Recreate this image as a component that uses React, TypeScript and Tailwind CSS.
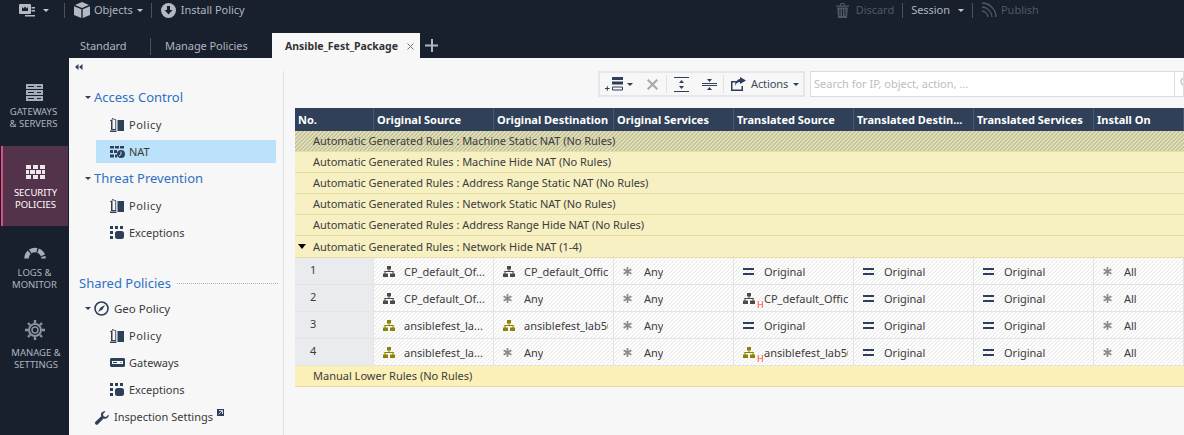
import React from "react";

const F = "[font-family:'Noto_Sans','Open_Sans',sans-serif]";

const Caret = ({ c = "border-t-[#c3c9d1]" }: { c?: string }) => (
  <span className={`inline-block w-0 h-0 border-l-[3px] border-r-[3px] border-t-[3px] border-l-transparent border-r-transparent ${c}`} />
);

const Net = ({ color = "#4a4a4a" }: { color?: string }) => (
  <svg width="12" height="11" viewBox="0 0 12 11" fill={color}>
    <rect x="4" y="0" width="4" height="3.5" />
    <rect x="5.5" y="3" width="1" height="2.5" />
    <rect x="1.5" y="5" width="9" height="1" />
    <rect x="1.5" y="5" width="1" height="3" />
    <rect x="9.5" y="5" width="1" height="3" />
    <rect x="0" y="7.5" width="5" height="3.5" />
    <rect x="7" y="7.5" width="5" height="3.5" />
  </svg>
);

const Star = () => (
  <svg width="9" height="9" viewBox="0 0 9 9" stroke="#8a8a8a" strokeWidth="1.7">
    <path d="M4.5 0v9M.6 2.2l7.8 4.6M.6 6.8l7.8-4.6" />
  </svg>
);

const Eq = () => (
  <svg width="11" height="7" viewBox="0 0 11 7" fill="#2e3f58">
    <rect width="11" height="2" />
    <rect y="5" width="11" height="2" />
  </svg>
);

const BookIcon = () => (
  <svg width="14" height="14" viewBox="0 0 14 14" fill="#2e3f58">
    <path d="M0 3l1-.3V12h5.2V1.5L2 0v1.5L0 2.2zM2.5 1l2.8 1v9H2.5z" />
    <path d="M7.5 2H14v11H7.5zM0 12.5h6.5V14H0z" />
  </svg>
);

const ExcIcon = () => (
  <svg width="14" height="13" viewBox="0 0 14 13" fill="#2e3f58">
    <rect x="0" y="0" width="3" height="3" />
    <rect x="5" y="0" width="3" height="3" />
    <rect x="10" y="0" width="3" height="3" />
    <rect x="0" y="5" width="3" height="3" />
    <rect x="0" y="10" width="3" height="3" />
    <rect x="5" y="5" width="9" height="8" rx="2.5" />
  </svg>
);

const NatIcon = () => (
  <svg width="15" height="12" viewBox="0 0 15 12" fill="#2e3f58">
    <rect x="0" y="0" width="4" height="2.5" />
    <rect x="5" y="0" width="4" height="2.5" />
    <rect x="10" y="0" width="4" height="2.5" />
    <rect x="0" y="4" width="3" height="3" />
    <rect x="4" y="4" width="3" height="3" />
    <rect x="0" y="8.5" width="4" height="3" />
    <rect x="5" y="8.5" width="2" height="3" />
    <circle cx="11" cy="8" r="4" />
    <path d="M11 5.5v3l-2 1.5" stroke="#bbe1fb" fill="none" />
  </svg>
);

const Sub = ({ icon, label }: { icon: React.ReactNode; label: string }) => (
  <div className="flex items-center h-[27px] pl-[41px]">
    <span className="w-[19px] flex items-center">{icon}</span>
    <span className={`text-[11px] pt-px text-[#3a3a3a] ${label === "Policy" ? "tracking-[0.5px]" : ""}`}>{label}</span>
  </div>
);

const Side = ({ icon, lines, active, h, pt, mt = "mt-[5px]", tx = "" }: { icon: React.ReactNode; lines: string[]; active?: boolean; h: string; pt: string; mt?: string; tx?: string }) => (
  <div className={`${h} ${pt} flex flex-col items-center ${active ? "bg-[#53334a] border-l-2 border-[#d8507f] ml-px mr-px text-white" : "text-[#aeb6c1]"}`}>
    {icon}
    <div className={`text-[9.5px] leading-[12px] ${mt} text-center whitespace-nowrap ${tx}`}>
      {lines.map((l) => (
        <div key={l}>{l}</div>
      ))}
    </div>
  </div>
);

const COLS = ["w-[79px]", "w-[120px]", "w-[120px]", "w-[120px]", "w-[120px]", "w-[120px]", "w-[120px]", "flex-1"];
const HEAD = ["No.", "Original Source", "Original Destination", "Original Services", "Translated Source", "Translated Destin...", "Translated Services", "Install On"];

const hatch = "bg-[repeating-linear-gradient(135deg,#faf2b8_0px,#faf2b8_1.414px,#f2edcb_1.414px,#f2edcb_2.828px)]";
const hatchDark = "bg-[repeating-linear-gradient(135deg,#bcc3b6_0px,#bcc3b6_1.414px,#e8e09c_1.414px,#e8e09c_2.828px)]";
const hatchCell = "bg-[repeating-linear-gradient(135deg,#ffffff_0px,#ffffff_1.414px,#f0f0f0_1.414px,#f0f0f0_2.828px)]";

const Section = ({ label, dark, open, h = "h-[21px]" }: { label: string; dark?: boolean; open?: boolean; h?: string }) => (
  <div className={`flex items-center ${h} border-b border-[#e6dea0] text-[11px] tracking-[-0.03px] text-[#3c3c3c] ${dark ? hatchDark : hatch}`}>
    <span className="w-[18px] pl-[3px] flex items-center">
      {open && <span className="inline-block w-0 h-0 border-l-4 border-r-4 border-t-[5px] border-l-transparent border-r-transparent border-t-black" />}
    </span>
    <span className="whitespace-nowrap pt-px">{label}</span>
  </div>
);

const Cell = ({ icon, text, i, badge }: { icon: React.ReactNode; text: string; i: number; badge?: boolean }) => (
  <div className={`${COLS[i]} shrink-0 ${hatchCell} border-r border-[#e4e4e4] flex items-center h-full relative overflow-hidden pr-[5px]`}>
    <span className="w-[30px] pl-[9px] shrink-0 flex items-center">{icon}</span>
    {badge && <span className="absolute left-[23px] top-[15px] text-[9px] leading-none text-[#ff3b3b]">H</span>}
    <span className="text-[11px] pt-[2px] text-[#3c3c3c] whitespace-nowrap overflow-hidden">{text}</span>
  </div>
);

type C = { k: "net" | "yel" | "star" | "eq"; t: string; b?: boolean };
const n: C = { k: "net", t: "" };
const rows: C[][] = [
  [{ ...n, t: "CP_default_Of..." }, { ...n, t: "CP_default_Office" }, { k: "star", t: "Any" }, { k: "eq", t: "Original" }, { k: "eq", t: "Original" }, { k: "eq", t: "Original" }, { k: "star", t: "All" }],
  [{ ...n, t: "CP_default_Of..." }, { k: "star", t: "Any" }, { k: "star", t: "Any" }, { ...n, t: "CP_default_Office", b: true }, { k: "eq", t: "Original" }, { k: "eq", t: "Original" }, { k: "star", t: "All" }],
  [{ k: "yel", t: "ansiblefest_la..." }, { k: "yel", t: "ansiblefest_lab50" }, { k: "star", t: "Any" }, { k: "eq", t: "Original" }, { k: "eq", t: "Original" }, { k: "eq", t: "Original" }, { k: "star", t: "All" }],
  [{ k: "yel", t: "ansiblefest_la..." }, { k: "star", t: "Any" }, { k: "star", t: "Any" }, { k: "yel", t: "ansiblefest_lab50", b: true }, { k: "eq", t: "Original" }, { k: "eq", t: "Original" }, { k: "star", t: "All" }],
];
const ic = (k: C["k"]) =>
  k === "net" ? <Net /> : k === "yel" ? <Net color="#8a8400" /> : k === "star" ? <Star /> : <Eq />;

export default function App() {
  return (
    <div className={`w-[1184px] h-[435px] overflow-hidden bg-[#18202d] flex flex-col ${F}`}>
      {/* top */}
      <div className="h-[20px] flex items-center text-[11px] tracking-[-0.03px] text-[#aeb6c1] shrink-0">
        <div className="w-[65px] pl-[19px] flex items-center gap-[8px] h-[15px] border-r border-[#4a525e]">
          <svg width="16" height="13" viewBox="0 0 16 13" fill="#b4bac3">
            <rect x="0" y="0" width="12" height="10" rx="1" />
            <path d="M3 3l1.5 1.5L6 2.5l1.5 2L9 3v4H3z" fill="#18202d" />
            <rect x="12.5" y="3" width="3.5" height="1.5" />
            <rect x="12.5" y="6" width="3.5" height="1.5" />
            <rect x="6" y="11" width="10" height="1.5" />
          </svg>
          <Caret />
        </div>
        <div className="pl-[9px] pr-[8px] flex items-center h-[15px] border-r border-[#4a525e]">
          <svg width="16" height="16" viewBox="0 0 16 16" fill="#b4bac3" className="mr-[4px]">
            <path d="M8 0l7 3-7 3-7-3zM0 4.3l7.3 3V16L0 13zM16 4.3l-7.3 3V16L16 13z" />
          </svg>
          <span>Objects</span>
          <span className="ml-[4px] flex"><Caret /></span>
        </div>
        <div className="pl-[9px] flex items-center">
          <svg width="15" height="15" viewBox="0 0 15 15" className="mr-[5px]">
            <circle cx="7.5" cy="7.5" r="7.5" fill="#b4bac3" />
            <path d="M6 3h3v4h2.5l-4 4.5-4-4.5H6z" fill="#18202d" />
          </svg>
          <span>Install Policy</span>
        </div>
        <div className="ml-[591px] flex items-center h-[15px]">
          <svg width="13" height="15" viewBox="0 0 13 15" fill="#4f5866" className="mr-[7px]">
            <path d="M0 2.5h13v1.3H0zM4 2.5V1l1-1h3l1 1v1.5H8V1H5v1.5zM1.2 4.500h10.600L11 15H2zM3.500 6v7h1V6zM6 6v7h1V6zM8.500 6v7h1V6z" fillRule="evenodd" />
          </svg>
          <span className="text-[#4f5866]">Discard</span>
          <span className="w-px h-[15px] bg-[#4a525e] ml-[8px] mr-[8px]" />
          <span>Session</span>
          <span className="ml-[8px] flex"><Caret /></span>
          <span className="w-px h-[15px] bg-[#4a525e] ml-[8px] mr-[8px]" />
          <svg width="16" height="16" viewBox="0 0 16 16" fill="none" stroke="#4f5866" strokeWidth="1.3" className="mr-[4px]">
            <path d="M1 1c7 0 14 6 14 14M1 5c5 0 10 5 10 10M1 9c3 0 6 3 6 6" />
          </svg>
          <span className="text-[#4f5866]">Publish</span>
        </div>
      </div>
      <div className="h-[38px] pt-[13px] flex text-[11px] tracking-[-0.06px] text-[#aeb6c1] shrink-0">
        <div className="w-[151px] pl-[80px] border-r border-[#4a525e] h-[17px] mt-[5px] flex items-center">Standard</div>
        <div className="w-[121px] pl-[14px] h-[17px] mt-[5px] flex items-center">Manage Policies</div>
        <div className="w-[148px] bg-[#f7f7f7] flex items-center pl-[13px] pt-[2px] text-[#333] font-bold text-[10.5px] tracking-normal whitespace-nowrap">
          Ansible_Fest_Package
          <svg width="7" height="7" viewBox="0 0 7 7" stroke="#777" className="ml-[9px]"><path d="M.5.5l6 6M6.5.5l-6 6" /></svg>
        </div>
        <svg width="14" height="14" viewBox="0 0 14 14" fill="#aeb6c1" className="ml-[5px] mt-[6px]">
          <rect x="6" y="0" width="2" height="13" />
          <rect x="0" y="5.500" width="13" height="2" />
        </svg>
      </div>

      <div className="flex-1 flex min-h-0">
        {/* sidebar */}
        <div className="w-[69px] shrink-0 flex flex-col">
          <Side
            h="h-[88px]"
            pt="pt-[26px]"
            tx="pr-[2px]"
            lines={["GATEWAYS", "& SERVERS"]}
            icon={
              <svg width="17" height="17" viewBox="0 0 17 17" fill="#a5adb8">
                <path d="M0 0h17v5H0zM0 6h17v5H0zM0 12h17v5H0z" />
                <path d="M2 2h6v1H2zM11 2h4v1h-4zM2 8h6v1H2zM11 8h4v1h-4zM2 14h6v1H2zM11 14h4v1h-4z" fill="#18202d" />
              </svg>
            }
          />
          <Side
            active
            h="h-[80px]"
            pt="pt-[19px]"
            mt="mt-[8px]"
            lines={["SECURITY", "POLICIES"]}
            icon={
              <svg width="19" height="14" viewBox="0 0 19 14" fill="#ece7ec">
                <path d="M0 0h5v4H0zM7 0h5v4H7zM14 0h5v4h-5zM0 5h3v4H0zM4 5h5v4H4zM10 5h5v4h-5zM16 5h3v4h-3zM0 10h5v4H0zM7 10h5v4H7zM14 10h5v4h-5z" />
              </svg>
            }
          />
          <Side
            h="h-[80px]"
            pt="pt-[20px]"
            mt="mt-[8px]"
            lines={["LOGS &", "MONITOR"]}
            icon={
              <svg width="22" height="13" viewBox="0 0 22 13" fill="none" stroke="#a5adb8" strokeWidth="4.5">
                <path d="M2.5 12.5A8.5 8.5 0 0 1 19.5 12.5" strokeDasharray="7 1.2" />
              </svg>
            }
          />
          <Side
            h="h-[100px]"
            pt="pt-[14px]"
            mt="mt-[7px]"
            tx="pl-[3px]"
            lines={["MANAGE &", "SETTINGS"]}
            icon={
              <svg width="20" height="20" viewBox="0 0 20 20" fill="none" stroke="#8c94a0">
                <circle cx="10" cy="10" r="6" strokeWidth="2" />
                <circle cx="10" cy="10" r="3" strokeWidth="1.5" />
                <path d="M10 0v3M10 17v3M0 10h3M17 10h3M3 3l2 2M15 15l2 2M17 3l-2 2M5 15l-2 2" strokeWidth="2.4" />
              </svg>
            }
          />
        </div>

        {/* tree */}
        <div className="w-[215px] shrink-0 bg-[#f7f7f7] relative">
          <div className="absolute right-0 top-[13px] bottom-0 w-px bg-[#e2e2e2]" />
          <div className="h-[26px] pl-[6px] pt-[6px] flex">
            <svg width="8" height="6" viewBox="0 0 8 6" fill="#2e3f58"><path d="M3.5 0v6L0 3zM7.500 0v6L4 3z" /></svg>
          </div>
          <div className="h-[27px] flex items-center pl-[16px] text-[13px] text-[#2e70c4]">
            <span className="mr-[3px] flex"><Caret c="border-t-[#2e3f58]" /></span>Access Control
          </div>
          <Sub icon={<BookIcon />} label="Policy" />
          <div className="flex items-center bg-[#bbe1fb] ml-[27px] pl-[14px] mr-[8px] h-[23px] mt-[2px] mb-[2px]">
            <span className="w-[19px] flex items-center"><NatIcon /></span>
            <span className="text-[11px] pt-px text-[#3a3a3a]">NAT</span>
          </div>
          <div className="h-[27px] flex items-center pl-[16px] text-[13px] text-[#2e70c4]">
            <span className="mr-[3px] flex"><Caret c="border-t-[#2e3f58]" /></span>Threat Prevention
          </div>
          <Sub icon={<BookIcon />} label="Policy" />
          <Sub icon={<ExcIcon />} label="Exceptions" />
          <div className="h-[23px] mt-[26px] flex items-center pl-[10px] pr-[6px] text-[13px] text-[#2e70c4]">
            <span>Shared Policies</span>
            <span className="flex-1 ml-[6px] border-b border-dotted border-[#b5b5b5]" />
          </div>
          <div className="h-[27px] flex items-center pl-[16px] text-[11.5px] text-[#3a3a3a]">
            <span className="mr-[3px] flex"><Caret c="border-t-[#2e3f58]" /></span>
            <svg width="15" height="15" viewBox="0 0 15 15" className="mr-[5px]">
              <circle cx="7.5" cy="7.5" r="6.5" fill="none" stroke="#2e3f58" strokeWidth="1.6" />
              <path d="M11 4L8.500 8.500 4 11l2.500-4.500z" fill="#2e3f58" />
            </svg>
            Geo Policy
          </div>
          <Sub icon={<BookIcon />} label="Policy" />
          <Sub
            icon={
              <svg width="15" height="9" viewBox="0 0 15 9" fill="#2e3f58">
                <path d="M1 0h13l1 1v7l-1 1H1L0 8V1zM2 3v3h11V3z" fillRule="evenodd" />
                <path d="M3 4h4v1H3zM10 4l1 1 1-1v1h-2z" />
              </svg>
            }
            label="Gateways"
          />
          <Sub icon={<ExcIcon />} label="Exceptions" />
          <div className="h-[29px] flex items-center pl-[26px] text-[11px] text-[#3a3a3a]">
            <svg width="14" height="14" viewBox="0 0 14 14" fill="#2e3f58" className="mr-[5px]">
              <path d="M13.500 3.500L11 6 8.500 5.200 8 3l2.500-2.500C8.500 0 6.500 1 6 3c-.2.8 0 1.600.2 2.200L.5 10.800c-.7.7-.7 1.700 0 2.400s1.700.7 2.400 0L8.600 7.600c1.500.5 3 .2 4.200-1 .8-.8 1-2 .7-3.100z" />
            </svg>
            Inspection Settings
            <svg width="7" height="7" viewBox="0 0 7 7" className="ml-[4px] -mt-[10px]">
              <rect width="7" height="7" fill="#2e3f58" />
              <path d="M2 1.500h3.500V5M5 2L1.500 5.500" stroke="#fff" strokeWidth="0.8" fill="none" />
            </svg>
          </div>
        </div>

        {/* main */}
        <div className="flex-1 bg-[#f7f7f7] min-w-0 pl-[11px]">
          <div className="h-[50px] pt-[13px] flex">
            <div className="ml-[303px] w-[207px] h-[26px] border-2 border-[#e4e6e9] flex items-center">
              <span className="ml-[5px] flex items-end">
                <svg width="19" height="16" viewBox="0 0 19 16" fill="#2e3f58">
                  <path d="M7 1h11v3H7zM7 5.500h11v3H7z" />
                  <path d="M7.500 11h10v3h-10z" fill="none" stroke="#2e3f58" />
                  <path d="M0 12h4.500v1H0zM1.800 10.200h1v4.600h-1z" />
                </svg>
              </span>
              <span className="ml-[3px] flex"><Caret c="border-t-[#2e3f58]" /></span>
              <svg width="11" height="11" viewBox="0 0 11 11" stroke="#a8a8a8" strokeWidth="2" className="ml-[14px]"><path d="M.7.7l9.600 9.600M10.300.7L.7 10.300" /></svg>
              <span className="w-px h-[18px] bg-[#e0e2e5] ml-[8px]" />
              <svg width="15" height="15" viewBox="0 0 15 15" fill="#2e3f58" className="ml-[7px]">
                <path d="M0 0h15v1H0zM0 14h15v1H0zM7.500 3l2.500 3H5zM7.500 12L5 9h5z" />
              </svg>
              <svg width="15" height="15" viewBox="0 0 15 15" fill="#2e3f58" className="ml-[13px]">
                <path d="M0 6h15v1H0zM0 8h15v1H0zM7.500 5L5 2h5zM7.500 10l2.500 3H5z" />
              </svg>
              <span className="w-px h-[18px] bg-[#e0e2e5] ml-[6px]" />
              <svg width="15" height="14" viewBox="0 0 15 14" fill="#2e3f58" className="ml-[7px]">
                <path d="M0 4h6v1.500H1.500v7h9V9H12v5H0z" />
                <path d="M9 0l6 3.500L9 7V5C7 5 5 6 4 9c0-4 2-6.500 5-7z" />
              </svg>
              <span className="ml-[5px] text-[11px] tracking-[-0.1px] text-[#3c4a5e]">Actions</span>
              <span className="ml-[5px] flex"><Caret c="border-t-[#2e3f58]" /></span>
            </div>
            <div className="ml-[5px] flex-1 h-[26px] bg-white border border-[#dcdcdc] flex items-center pl-[3px] text-[11px] text-[#bdbdbd]">
              <span className="flex-1 pt-px">Search for IP, object, action, ...</span>
              <span className="w-[9px] h-full border-l border-[#dcdcdc] overflow-hidden flex items-center pl-[5px] pb-[5px] shrink-0">
                <svg width="9" height="9" viewBox="0 0 9 9" fill="none" stroke="#c4c4c4" strokeWidth="1.4" className="shrink-0"><circle cx="4.500" cy="4.500" r="3.500" /></svg>
              </span>
            </div>
          </div>

          {/* table */}
          <div className="flex h-[23px] bg-[#2f4058] text-white text-[11px] font-bold">
            {HEAD.map((h, i) => (
              <div key={h} className={`${COLS[i]} shrink-0 flex items-center pl-[3px] pt-[2px] border-r border-[#48586f] whitespace-nowrap overflow-hidden`}>
                {h}
              </div>
            ))}
          </div>
          <Section dark label="Automatic Generated Rules : Machine Static NAT (No Rules)" />
          <Section label="Automatic Generated Rules : Machine Hide NAT (No Rules)" />
          <Section label="Automatic Generated Rules : Address Range Static NAT (No Rules)" />
          <Section label="Automatic Generated Rules : Network Static NAT (No Rules)" />
          <Section label="Automatic Generated Rules : Address Range Hide NAT (No Rules)" />
          <Section open h="h-[22px]" label="Automatic Generated Rules : Network Hide NAT (1-4)" />
          {rows.map((r, ri) => (
            <div key={ri} className="flex h-[27px] border-b border-[#e4e4e4]">
              <div className={`${COLS[0]} shrink-0 bg-[#e9ebee] border-r border-[#e4e4e4] text-[11px] text-[#3c3c3c] pl-[15px] pb-[2px] flex items-center`}>{ri + 1}</div>
              {r.map((c, i) => (
                <Cell key={i} i={i + 1} icon={ic(c.k)} text={c.t} badge={c.b} />
              ))}
            </div>
          ))}
          <div className="h-[21px] bg-[#fbf0b8] border-b border-[#e6dea0] flex items-center pl-[18px] pt-px text-[11px] text-[#3c3c3c]">Manual Lower Rules (No Rules)</div>
        </div>
      </div>
    </div>
  );
}
